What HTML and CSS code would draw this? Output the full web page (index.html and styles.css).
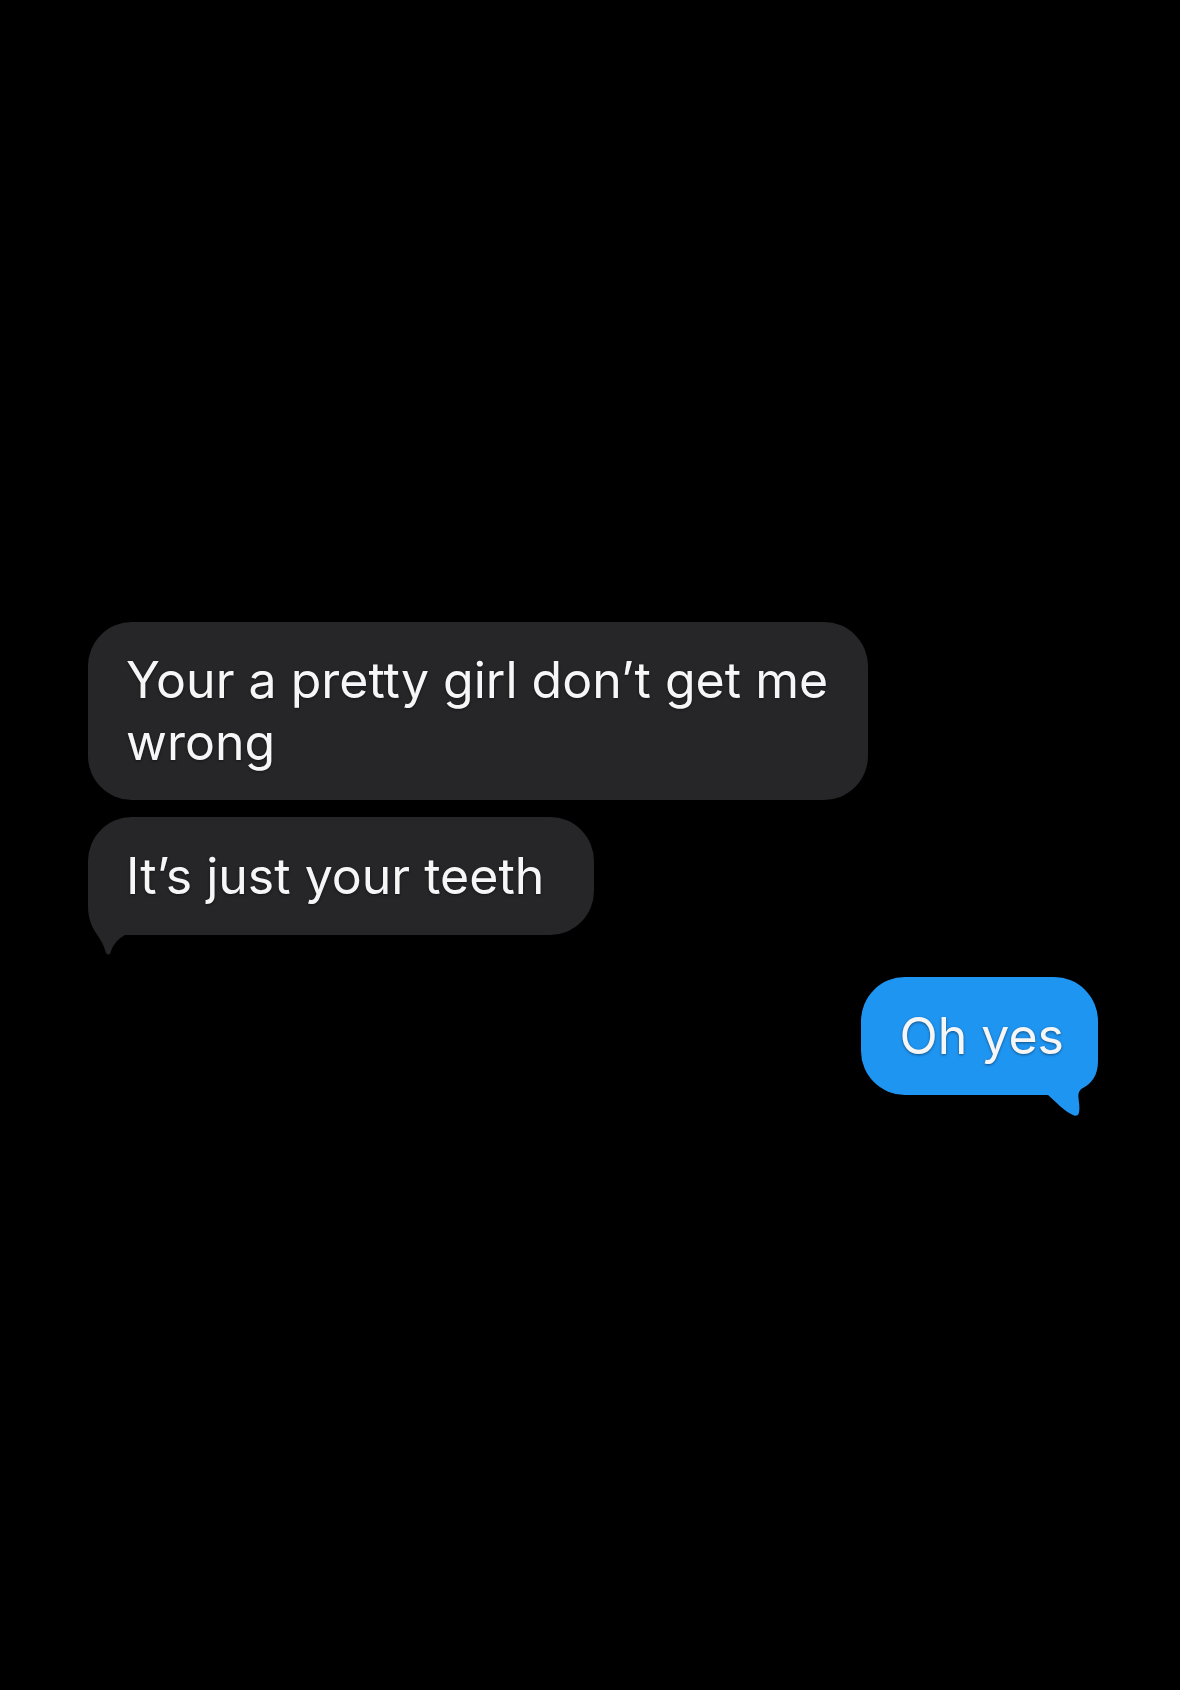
FILE: index.html
```html
<!DOCTYPE html>
<html lang="en">
<head>
<meta charset="utf-8">
<title>Messages</title>
<link rel="stylesheet" href="styles.css">
</head>
<body>
<main class="thread">
  <div class="bubble in first"><span class="text">Your a pretty girl don’t get me wrong</span></div>
  <div class="bubble in second">
    <svg class="tail tail-left" width="50" height="70" viewBox="0 0 50 70" aria-hidden="true">
      <path d="M0 0 L0 18 C0 32 4 40 8 46 C12 52 16 58 17.5 64.5 C18 68 21.5 68.5 22.5 66 C24 60 28 53 37 48 L50 48 L50 0 Z"/>
    </svg>
    <span class="text">It’s just your teeth</span>
  </div>
  <div class="bubble out">
    <svg class="tail tail-right" width="50" height="70" viewBox="0 0 50 70" aria-hidden="true">
      <path d="M50 0 L50 14 C50 28 44 36 35 41 C31 43 30 47 30.5 51 C31 56 32 61 31 65.5 C30.5 69 27 69.5 25 68 C16 64 8 55 0 48 L0 0 Z"/>
    </svg>
    <span class="text">Oh yes</span>
  </div>
</main>
</body>
</html>
```
FILE: styles.css
```css
html, body {
  margin: 0;
  padding: 0;
  background: #000;
}

body {
  width: 1180px;
  height: 1690px;
  overflow: hidden;
}

.thread {
  display: flex;
  flex-direction: column;
  align-items: flex-start;
  padding: 622px 82px 0 88px;
  font-family: Inter, "Liberation Sans", sans-serif;
}

.bubble {
  position: relative;
  box-sizing: border-box;
  padding: 28px 40px;
  border-radius: 44px;
  font-size: 50px;
  line-height: 62px;
  color: #f6f6f6;
  letter-spacing: 0;
  text-shadow: 0 1px 3px rgba(0, 0, 0, 0.45);
}

.text {
  position: relative;
}

.in {
  background: #262629;
}

.first {
  width: 780px;
  padding: 27px 30px 27px 38px;
  margin-bottom: 17px;
}

.second {
  padding: 28px 50px 28px 38px;
}

.out {
  align-self: flex-end;
  background: #1f95f2;
  margin-top: 42px;
  padding: 28px 34px 28px 38px;
}

.tail {
  position: absolute;
  bottom: -22px;
}

.tail-left {
  left: 0;
  fill: #262629;
}

.tail-right {
  right: 0;
  fill: #1f95f2;
}
```
